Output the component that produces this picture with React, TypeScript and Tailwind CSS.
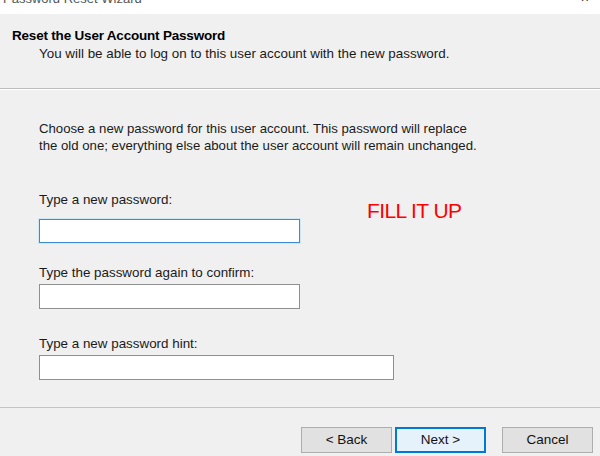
import React from 'react';

const font = { fontFamily: '"Liberation Sans", Arial, sans-serif' };

export default function App() {
  return (
    <div
      className="w-[600px] h-[456px] bg-[#f0f0f0] flex flex-col overflow-hidden text-[#000]"
      style={font}
    >
      {/* Window title strip (cut off at the top) */}
      <div className="h-[14px] bg-white flex items-end justify-between overflow-hidden px-[3px]">
        <span className="text-[13px] leading-[14px] text-[#555] mb-[8px]">Password Reset Wizard</span>
        <span className="text-[14px] leading-[14px] text-[#333] mb-[9px] mr-[8px]">×</span>
      </div>

      {/* Header */}
      <div className="h-[75px] pt-[13px] pl-[12px] border-b border-[#bcbcbc] shadow-[0_1px_0_#ffffff]">
        <h1 className="text-[13.5px] leading-[17px] font-bold tracking-[-0.2px]">Reset the User Account Password</h1>
        <p className="text-[13.4px] leading-[16px] pl-[27px] mt-[2px] text-[#1a1a1a]">
          You will be able to log on to this user account with the new password.
        </p>
      </div>

      {/* Body */}
      <div className="flex-1 pl-[39px] pt-[31px] relative">
        <p className="text-[13.2px] leading-[17px] text-[#1a1a1a]">
          Choose a new password for this user account. This password will replace
          <br />
          the old one; everything else about the user account will remain unchanged.
        </p>

        <label className="block text-[13.4px] leading-[16px] mt-[38px] text-[#1a1a1a]">Type a new password:</label>
        <div className="mt-[11px] w-[261px] h-[24px] bg-white border border-[#3c8dd0] shadow-[0_0_0_1px_#cfe6f7]" />

        <label className="block text-[13.4px] leading-[16px] mt-[22px] text-[#1a1a1a]">Type the password again to confirm:</label>
        <div className="mt-[3px] w-[261px] h-[25px] bg-white border border-[#8f8f8f]" />

        <label className="block text-[13.4px] leading-[16px] mt-[27px] text-[#1a1a1a]">Type a new password hint:</label>
        <div className="mt-[3px] w-[355px] h-[25px] bg-white border border-[#8f8f8f]" />

        <span className="absolute left-[367px] top-[110px] text-[21px] leading-[24px] tracking-[-0.6px] text-[#ff0000]">FILL IT UP</span>
      </div>

      {/* Footer */}
      <div className="h-[49px] border-t border-[#c4c4c4] flex items-start justify-end gap-[3px] pt-[19px] pr-[7px]">
        <button className="w-[91px] h-[26px] bg-[#e1e1e1] border border-[#adadad] text-[13.5px] text-[#111]">&lt; Back</button>
        <button className="w-[91px] h-[26px] bg-[#e5f1fb] border-2 border-[#0078d7] text-[13.5px] text-[#111]">Next &gt;</button>
        <button className="w-[91px] h-[26px] ml-[13px] bg-[#e1e1e1] border border-[#adadad] text-[13.5px] text-[#111]">Cancel</button>
      </div>
    </div>
  );
}
